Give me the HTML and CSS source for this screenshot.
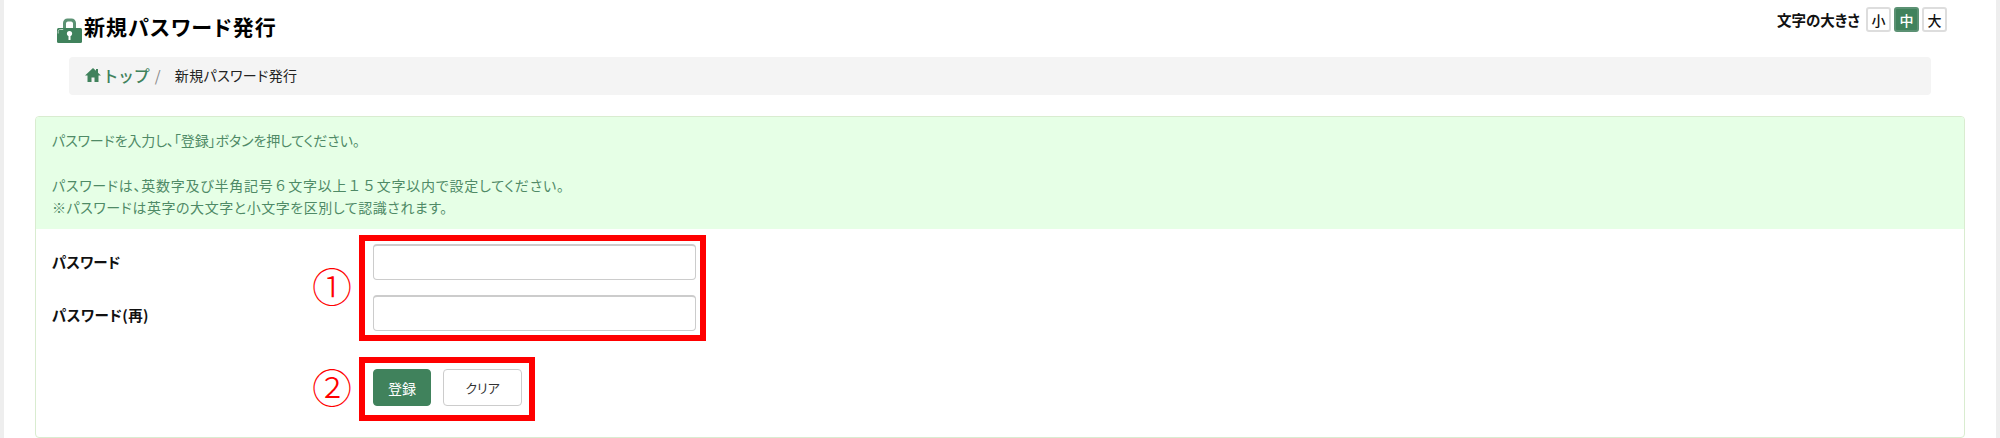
FILE: index.html
```html
<!DOCTYPE html>
<html lang="ja">
<head>
  <meta charset="UTF-8">
  <title>新規パスワード発行</title>
  <link rel="stylesheet" href="styles.css">
</head>
<body>
  <div class="page">
    <div class="top-bar">
      <h1 class="page-title">
        <svg class="lock-icon" viewBox="0 0 25 25" aria-hidden="true">
          <path d="M6 11V5C6 2.500 8 .5 10.500.5h4C17 .5 19 2.500 19 5v6h-3V5.500c0-1-.8-2-2-2h-3c-1.200 0-2 1-2 2V11z" fill="#5c9274"/>
          <rect x="0" y="10" width="25" height="15" rx="1.500" fill="#40825c"/>
          <path d="M1.200 15.500v-2c0-1.300.8-2 2-2h3" fill="none" stroke="#b9d3c3" stroke-width="1"/>
          <circle cx="12.500" cy="15.500" r="2.600" fill="#fff"/>
          <rect x="11.500" y="16" width="2" height="6" fill="#fff"/>
        </svg>
        <span>新規パスワード発行</span>
      </h1>
      <div class="font-size">
        <span class="font-size-label">文字の大きさ</span>
        <button class="size-btn">小</button>
        <button class="size-btn active">中</button>
        <button class="size-btn">大</button>
      </div>
    </div>

    <div class="breadcrumb">
      <svg class="home-icon" viewBox="0 0 16 16" aria-hidden="true">
        <path d="M8 1 0 8.500h2.500V15h4v-4.500h3V15h4V8.500H16L13 5.700V2h-2v1.800z" fill="#40825c"/>
      </svg>
      <a class="crumb-link">トップ</a>
      <span class="crumb-sep">/</span>
      <span class="crumb-current">新規パスワード発行</span>
    </div>

    <div class="panel">
      <div class="panel-head">
        <p class="line-one">パスワードを入力し、「登録」ボタンを押してください。</p>
        <p class="line-two">パスワードは、英数字及び半角記号<span class="wide">６</span>文字以上<span class="wide">１５</span>文字以内で設定してください。</p>
        <p class="line-three">※パスワードは英字の大文字と小文字を区別して認識されます。</p>
      </div>
      <div class="panel-body">
        <div class="form-row">
          <div class="labels">
            <label>パスワード</label>
            <label class="label-again">パスワード(再)</label>
          </div>
          <span class="mark">①</span>
          <div class="red-box fields">
            <input type="password">
            <input type="password">
          </div>
        </div>
        <div class="form-row buttons-row">
          <span class="mark">②</span>
          <div class="red-box actions">
            <button class="btn btn-primary">登録</button>
            <button class="btn">クリア</button>
          </div>
        </div>
      </div>
    </div>
  </div>
</body>
</html>
```

FILE: styles.css
```css
* {
  box-sizing: border-box;
}
body {
  margin: 0;
  background: #fff;
  font-family: "Noto Sans CJK JP", "Noto Sans", sans-serif;
  font-feature-settings: "palt";
  color: #111;
  overflow: hidden;
}
p {
  margin: 0;
}
.page {
  height: 438px;
  border-left: 4px solid #eee;
  border-right: 4px solid #eee;
  padding: 0 31px;
}
.top-bar {
  height: 57px;
  display: flex;
  justify-content: space-between;
  align-items: flex-start;
  padding: 7px 18px 0 22px;
}
.page-title {
  display: flex;
  align-items: flex-start;
  margin: 0;
  font-size: 21px;
  line-height: 30px;
  font-weight: 700;
  color: #000;
  letter-spacing: 1.100px;
}
.lock-icon {
  width: 25px;
  height: 25px;
  margin-top: 11px;
  margin-right: 2px;
}
.page-title span {
  margin-top: 4px;
}
.font-size {
  display: flex;
  align-items: center;
  gap: 3px;
}
.font-size-label {
  font-size: 14.500px;
  font-weight: 700;
  margin-right: 3px;
}
.size-btn {
  width: 25px;
  height: 25px;
  padding: 0;
  background: #fff;
  border: 2px solid #ddd;
  border-radius: 3px;
  font: inherit;
  font-size: 14px;
  font-weight: 500;
  color: #111;
}
.size-btn.active {
  background: #40825c;
  border-color: #5b9173;
  color: #fff;
}
.breadcrumb {
  height: 38px;
  margin: 0 34px;
  padding: 0 0 2px 16px;
  display: flex;
  align-items: center;
  background: #f4f4f4;
  border-radius: 4px;
  font-size: 14px;
}
.home-icon {
  width: 16px;
  height: 16px;
  margin-right: 4px;
}
.crumb-link {
  color: #40825c;
  font-size: 16px;
  font-weight: 500;
  letter-spacing: 2.400px;
}
.crumb-sep {
  color: #888;
  font-size: 15px;
  margin: 0 14px 0 3px;
}
.crumb-current {
  color: #222;
  letter-spacing: 0.4px;
}
.panel {
  margin-top: 21px;
  height: 322px;
  border: 1px solid #d9ecd0;
  border-radius: 4px;
  overflow: hidden;
}
.panel-head {
  height: 112px;
  padding: 12px 16px 0;
  background: #e6ffe6;
  color: #4f8a66;
  font-size: 14px;
  line-height: 22px;
}
.line-one {
  letter-spacing: -0.1px;
}
.line-two {
  margin-top: 23px;
  letter-spacing: 0.75px;
}
.line-three {
  letter-spacing: 0.55px;
}
.wide {
  font-feature-settings: normal;
}
.panel-body {
  padding-top: 6px;
}
.form-row {
  display: flex;
}
.labels {
  width: 277px;
  padding-left: 16px;
  padding-top: 17px;
  display: flex;
  flex-direction: column;
  gap: 33px;
  font-size: 14.500px;
  line-height: 20px;
  font-weight: 700;
}
.label-again {
  letter-spacing: 0.4px;
}
.mark {
  width: 46px;
  margin-top: -7px;
  margin-left: -1px;
  margin-right: 1px;
  align-self: center;
  color: #f00;
  font-size: 40px;
  line-height: 40px;
  font-weight: 300;
}
.buttons-row {
  margin-top: 16px;
  padding-left: 277px;
}
.red-box {
  border: 6px solid #f00;
}
.fields {
  width: 347px;
  height: 106px;
  padding: 3px 4px 0 8px;
  display: flex;
  flex-direction: column;
  gap: 15px;
}
.fields input {
  width: 100%;
  height: 36px;
  background: #fff;
  border: 1px solid #ccc;
  border-top-width: 2px;
  border-radius: 4px;
}
.actions {
  width: 176px;
  height: 64px;
  padding: 6px 0 0 8px;
  display: flex;
  gap: 12px;
}
.btn {
  width: 79px;
  height: 37px;
  padding: 0;
  background: #fff;
  border: 1px solid #ccc;
  border-radius: 4px;
  font: inherit;
  font-size: 13px;
  color: #333;
}
.btn-primary {
  width: 58px;
  background: #40825c;
  border-color: #40825c;
  color: #fff;
  font-size: 14px;
}
```
